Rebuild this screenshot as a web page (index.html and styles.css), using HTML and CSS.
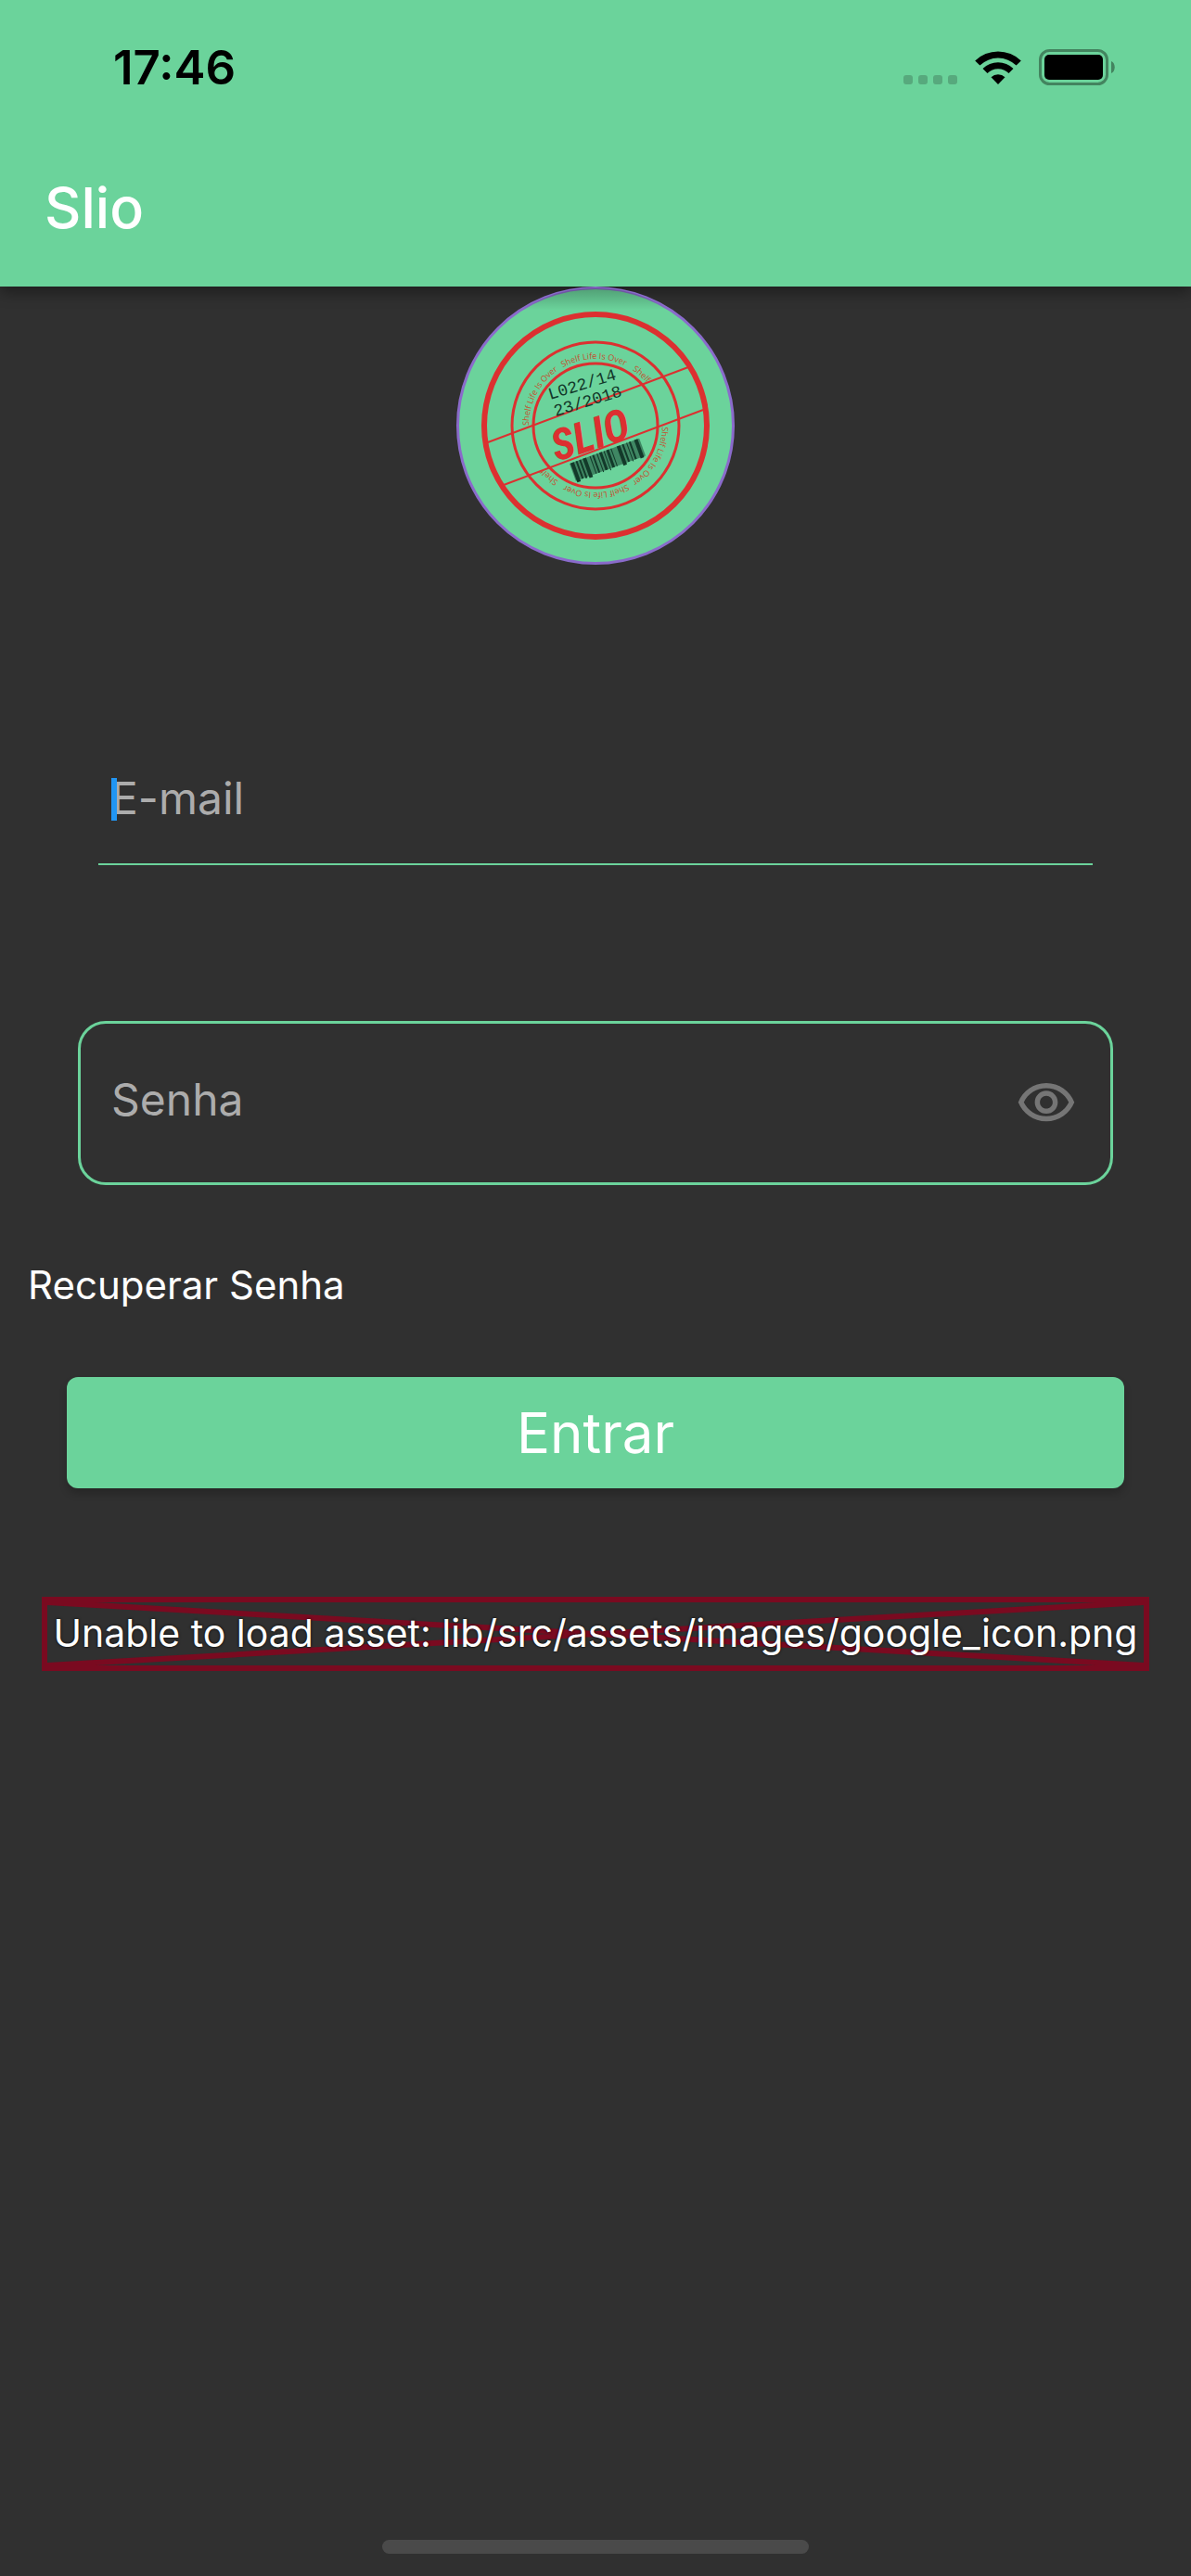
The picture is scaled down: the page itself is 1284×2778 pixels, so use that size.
FILE: index.html
```html
<!DOCTYPE html>
<html lang="pt-BR">
<head>
<meta charset="utf-8">
<meta name="viewport" content="width=device-width, initial-scale=1">
<title>Slio</title>
<link rel="stylesheet" href="styles.css">
</head>
<body>
<header class="app-bar">
  <div class="status-bar">
    <time class="clock">17:46</time>
    <div class="status-icons">
      <svg class="signal" viewBox="0 0 58 10" aria-hidden="true">
        <rect width="10" height="10" rx="3"/><rect x="16" width="10" height="10" rx="3"/><rect x="32" width="10" height="10" rx="3"/><rect x="48" width="10" height="10" rx="3"/>
      </svg>
      <svg class="wifi" viewBox="0 0 52 38" aria-hidden="true">
        <path d="M1.200 11.500A35.500 35.500 0 0 1 50.800 11.500L45.600 16.500A28.300 28.300 0 0 0 6.400 16.500Z"/>
        <path d="M9.500 20A23.700 23.700 0 0 1 42.500 20L37.500 25A16.500 16.500 0 0 0 14.500 25Z"/>
        <path d="M18.500 29.300A11 11 0 0 1 33.500 29.300L26 37Z"/>
      </svg>
      <svg class="battery" viewBox="0 0 82 40" aria-hidden="true">
        <rect class="battery-shell" x="1.500" y="1.500" width="72" height="36" rx="10"/>
        <rect x="6" y="6" width="63" height="27" rx="5"/>
        <path class="battery-cap" d="M78 13c5 2 5 11 0 13z"/>
      </svg>
    </div>
  </div>
  <h1 class="title">Slio</h1>
</header>
<main class="content">
  <svg class="logo" viewBox="0 0 300 300" role="img" aria-label="Slio">
    <defs>
      <path id="ring" d="M78 150a72 72 0 0 1 144 0a72 72 0 0 1 -144 0"/>
      <linearGradient id="shade" x2="0" y2="1">
        <stop offset="0" stop-color="#000" stop-opacity="0.25"/>
        <stop offset="0.080" stop-color="#000" stop-opacity="0"/>
      </linearGradient>
    </defs>
    <circle class="logo-disc" cx="150" cy="150" r="148.500"/>
    <circle cx="150" cy="150" r="148.500" fill="url(#shade)"/>
    <g class="logo-lines">
      <circle cx="150" cy="150" r="120" stroke-width="6"/>
      <circle cx="150" cy="150" r="90" stroke-width="3"/>
      <circle cx="150" cy="150" r="67" stroke-width="3"/>
      <path d="M34 168L250 87M51 214L266 133" stroke-width="2"/>
    </g>
    <g class="logo-ring-text">
      <text><textPath href="#ring" startOffset="0">Shelf Life Is Over</textPath></text>
      <text><textPath href="#ring" startOffset="76">Shelf Life Is Over</textPath></text>
      <text><textPath href="#ring" startOffset="155">Shelf</textPath></text>
      <text><textPath href="#ring" startOffset="227">Shelf Life Is Over</textPath></text>
      <text><textPath href="#ring" startOffset="303">Shelf Life Is Over</textPath></text>
      <text><textPath href="#ring" startOffset="381">Shelf</textPath></text>
    </g>
    <g class="logo-stamp">
      <text transform="translate(101 122) rotate(-17)">L022/14</text>
      <text transform="translate(107 140) rotate(-17)">23/2018</text>
    </g>
    <text class="logo-name" transform="translate(108 189) rotate(-18)">SLIO</text>
    <g transform="translate(122 191) rotate(-20)">
      <rect class="code-back" width="80" height="20"/>
      <path class="code-bars" d="M1 0h4v22h-4zM7 0h2v20h-2zM11 0h2v21h-2zM15 0h4v22h-4zM23 0h1v20h-1zM26 0h2v20h-2zM31 0h1v21h-1zM34 0h3v20h-3zM39 0h1v22h-1zM42 0h3v20h-3zM47 0h1v20h-1zM54 0h4v22h-4zM60 0h2v20h-2zM65 0h1v21h-1zM68 0h2v20h-2zM74 0h4v21h-4z"/>
    </g>
  </svg>
  <form class="login">
    <div class="field field-email">
      <input class="input" type="email" placeholder="E-mail" aria-label="E-mail">
      <span class="caret"></span>
    </div>
    <div class="field field-password">
      <input class="input" type="password" placeholder="Senha" aria-label="Senha">
      <button class="reveal" type="button" aria-label="Mostrar senha">
        <svg class="eye" viewBox="0 0 24 24" aria-hidden="true"><path d="M12 6c3.790 0 7.170 2.130 8.820 5.500C19.170 14.870 15.790 17 12 17s-7.170-2.130-8.820-5.500C4.830 8.130 8.210 6 12 6m0-2C7 4 2.730 7.110 1 11.500 2.730 15.890 7 19 12 19s9.270-3.110 11-7.500C21.270 7.110 17 4 12 4zm0 5c1.380 0 2.500 1.120 2.500 2.500S13.380 14 12 14s-2.500-1.120-2.500-2.500S10.620 9 12 9m0-2c-2.480 0-4.500 2.020-4.500 4.500S9.520 16 12 16s4.500-2.020 4.500-4.500S14.480 7 12 7z"/></svg>
      </button>
    </div>
    <a class="recover" href="#">Recuperar Senha</a>
    <button class="submit" type="submit">Entrar</button>
  </form>
  <div class="asset-error">
    <svg class="cross" viewBox="0 0 100 100" preserveAspectRatio="none" aria-hidden="true">
      <path d="M0 0L100 100M100 0L0 100"/>
    </svg>
    <p class="message">Unable to load asset: lib/src/assets/images/google_icon.png</p>
  </div>
</main>
<div class="home-bar"></div>
</body>
</html>
```
FILE: styles.css
```css
* {
  box-sizing: border-box;
}

body {
  margin: 0;
  min-height: 100vh;
  display: flex;
  flex-direction: column;
  background: #303030;
  color: #fff;
  font-family: Inter, "Liberation Sans", sans-serif;
  font-size: 42px;
}

.app-bar {
  padding: 42px 82px 48px 48px;
  background: #6bd39b;
  box-shadow: 0 6px 15px rgba(0, 0, 0, 0.4);
}

.status-bar {
  display: flex;
  justify-content: space-between;
  align-items: center;
  height: 62px;
  margin-bottom: 84px;
  padding-left: 74px;
  color: #000;
}

.clock {
  font-size: 51px;
  font-weight: 600;
  line-height: 62px;
}

.status-icons {
  display: flex;
  align-items: flex-end;
  gap: 18px;
}

.signal {
  width: 58px;
  height: 10px;
  margin-bottom: 2px;
  fill: #57a97d;
}

.wifi {
  width: 52px;
  height: 38px;
  margin-bottom: 1px;
}

.battery {
  width: 82px;
  height: 40px;
}

.battery-shell {
  fill: none;
  stroke: #43845f;
  stroke-width: 3;
}

.battery-cap {
  fill: #43845f;
}

.title {
  margin: 0;
  font-size: 61px;
  font-weight: 500;
  line-height: 73px;
}

.content {
  flex: 1;
  display: flex;
  flex-direction: column;
  align-items: center;
}

.logo {
  width: 300px;
  height: 300px;
}

.logo-disc {
  fill: #6bd39b;
  stroke: #8a6bcb;
  stroke-width: 3;
}

.logo-lines {
  fill: none;
  stroke: #dc3030;
}

.logo-ring-text {
  fill: #c4502f;
  font-family: "Open Sans", sans-serif;
  font-size: 9px;
}

.logo-stamp {
  fill: #12382a;
  font-family: "Liberation Mono", monospace;
  font-size: 18px;
}

.logo-name {
  fill: #dc3030;
  font-family: "Roboto Condensed", Roboto, sans-serif;
  font-size: 47px;
  font-weight: 700;
  font-style: italic;
}

.code-back {
  fill: #3f8763;
}

.code-bars {
  fill: #133a2a;
}

.login {
  align-self: stretch;
  display: flex;
  flex-direction: column;
  padding: 180px 72px 0;
}

.field {
  position: relative;
  display: flex;
  align-items: center;
}

.field-email {
  height: 144px;
  margin: 0 34px;
  padding: 0 14px;
  border-bottom: 2px solid #6bd39b;
}

.field-password {
  height: 177px;
  margin: 168px 12px 0;
  padding: 0 36px 0 33px;
  border: 3px solid #6bd39b;
  border-radius: 30px;
}

.input {
  flex: 1;
  min-width: 0;
  height: 72px;
  padding: 0;
  border: 0;
  outline: 0;
  background: none;
  color: #fff;
  font-family: inherit;
  font-size: 48px;
  line-height: 60px;
}

.field-password .input {
  height: 80px;
  padding-bottom: 8px;
}

.input::placeholder {
  color: #acacac;
  opacity: 1;
}

.caret {
  position: absolute;
  left: 14px;
  top: 50px;
  width: 6px;
  height: 46px;
  background: #2196f3;
}

.reveal {
  display: flex;
  padding: 0;
  border: 0;
  background: none;
}

.eye {
  width: 66px;
  height: 66px;
  fill: #757575;
}

.recover {
  align-self: flex-start;
  margin: 83px 0 0 -42px;
  color: #fff;
  line-height: 50px;
  text-decoration: none;
}

.submit {
  height: 120px;
  margin-top: 74px;
  border: 0;
  border-radius: 12px;
  background: #6bd39b;
  box-shadow: 0 6px 9px rgba(0, 0, 0, 0.2);
  color: #fff;
  font-family: inherit;
  font-size: 60px;
}

.asset-error {
  position: relative;
  align-self: stretch;
  display: flex;
  justify-content: center;
  align-items: center;
  height: 80px;
  margin: 117px 45px 0;
  border: 6px solid #7a0a20;
}

.cross {
  position: absolute;
  inset: 0;
  width: 100%;
  height: 100%;
}

.cross path {
  stroke: #7a0a20;
  stroke-width: 6;
  vector-effect: non-scaling-stroke;
}

.message {
  position: relative;
  margin: 0;
  padding-bottom: 2px;
  font-size: 41px;
  line-height: 50px;
  white-space: nowrap;
  text-shadow: 0 0 3px #000;
}

.home-bar {
  align-self: center;
  width: 460px;
  max-width: 80%;
  height: 15px;
  margin-bottom: 24px;
  border-radius: 8px;
  background: #4a4a4a;
}
```
